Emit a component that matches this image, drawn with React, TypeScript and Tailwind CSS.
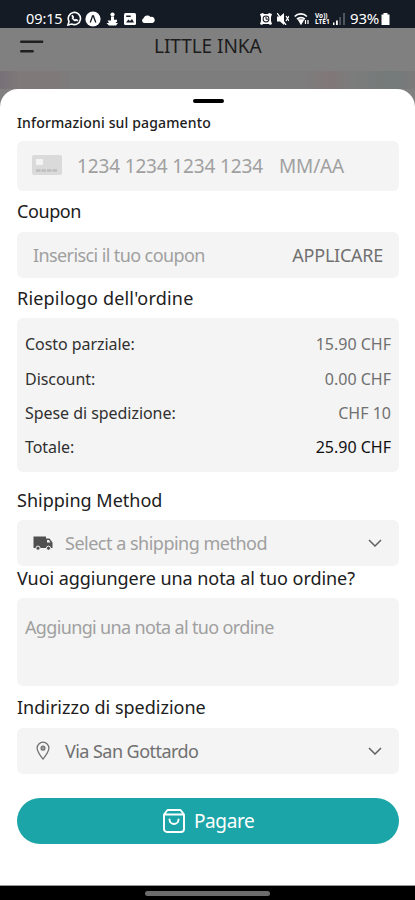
import React from 'react';

interface SectionTitleProps {
    children: React.ReactNode;
    className?: string;
}

const SectionTitle: React.FC<SectionTitleProps> = ({ children, className = '' }) => {
    return (
        <h2 className={`flex items-center whitespace-nowrap text-[18px] leading-none text-[#202020] ${className}`}>
            {children}
        </h2>
    );
};

const Chevron = () => (
    <svg className="ml-auto h-2 w-[14px]" viewBox="0 0 14 8" fill="none">
        <path d="M1 1l6 6 6-6" stroke="#606060" strokeWidth="1.5" />
    </svg>
);

const StatusBar = () => {
    return (
        <div className="flex h-7 shrink-0 items-center bg-[#151b25] pl-[26px] pt-[9px] text-white">
            <span className="w-[37px] whitespace-nowrap text-[14.5px] leading-none tracking-[-0.1px]">09:15</span>
            <svg className="ml-1 h-[15px] w-[15px]" viewBox="0 0 15 15" fill="none">
                <path d="M1 14l1-3.6A6.1 6.1 0 1 1 4.7 13z" stroke="white" strokeWidth="1.6" />
                <path d="M5 4.2l1.2 2-.7 1c.6 1.1 1.4 1.8 2.5 2.3l1-.8 2 1" stroke="white" strokeWidth="1.7" />
            </svg>
            <svg className="ml-[3px] h-4 w-4" viewBox="0 0 16 16">
                <circle cx="8" cy="8" r="7.6" fill="white" />
                <path d="M5.200 11.500Q7 7 7.500 5h1Q9 7 10.800 11.500" stroke="#151b25" strokeWidth="1.3" fill="none" />
            </svg>
            <svg className="ml-[5px] h-[14px] w-3" viewBox="0 0 12 14" fill="white">
                <circle cx="6.500" cy="2.500" r="2.100" />
                <path d="M5 4.500h3v3.300h3V9.500L9.500 11H12l-2 2.500H3L.5 11H3L1.500 8.500H5z" />
            </svg>
            <svg className="ml-[6px] h-3 w-3" viewBox="0 0 12 12">
                <rect width="12" height="12" rx="1.5" fill="white" />
                <path d="M2 9.500l2.400-3 1.600 1.500L8 6l2 3.500zM2.200 2.500h4.500V4H2.200z" fill="#151b25" />
            </svg>
            <svg className="ml-[5px] h-[9px] w-[14px]" viewBox="0 0 14 9" fill="white">
                <path d="M3 9a2.500 2.500 0 0 1-.5-4.700A4 3.800 0 0 1 9.500 3 3 3 0 0 1 11.500 9z" />
            </svg>
            <svg className="ml-[105px] h-3 w-3" viewBox="0 0 12 12">
                <path d="M0 1l3-1 1 1h4l1-1 3 1-1 3v4l1 3-2 1-1-1H3l-1 1-2-1 1-3V4z" fill="white" />
                <circle cx="6" cy="6" r="3.4" fill="#151b25" />
                <circle cx="6" cy="6" r="2.4" fill="white" />
                <path d="M6 3.800V6.200H8" stroke="#151b25" fill="none" />
            </svg>
            <svg className="ml-[5px] h-3 w-3" viewBox="0 0 12 12" fill="white">
                <path d="M0 3.500h3L7 0v12L3 8.500H0z" />
                <path d="M0 0l9 12M9 3l3 5M12 3L9 8" stroke="white" strokeWidth="1.3" />
            </svg>
            <svg className="ml-[5px] h-3 w-4" viewBox="0 0 16 12" fill="none" stroke="white" strokeWidth="1.7">
                <path d="M.7 3.500a8.500 8.500 0 0 1 12.200 0M3 6.200a5.400 5.400 0 0 1 7.800 0" />
                <path d="M5 7h4L7 10.500z" fill="white" />
                <path d="M11.500 7v4M14 11V7" strokeWidth="1.2" />
            </svg>
            <span className="ml-[5px] w-[15px] whitespace-pre-line text-[6.5px] font-bold leading-[6px]">{'Vo))\nLTE1'}</span>
            <svg className="ml-[3px] h-3 w-3" viewBox="0 0 12 12">
                <path d="M0 9.500h1.500V12H0zM3 7.500h1.800V12H3z" fill="white" />
                <path d="M6.200 4h1.800v8H6.200zM10 0h2v12h-2z" fill="#505660" />
            </svg>
            <span className="ml-[5px] w-[31px] whitespace-nowrap text-[15px] leading-none tracking-[-0.2px]">93%</span>
            <svg className="h-3 w-[9px]" viewBox="0 0 9 12" fill="white">
                <path d="M2.500 0h4v1.500H8.500V12H.5V1.500h2z" />
            </svg>
        </div>
    );
};

const PageHeader = () => {
    return (
        <div className="flex h-[61px] shrink-0 flex-col bg-[#808080]">
            <div className="flex h-[37px] items-center pl-5">
                <svg className="mb-[1px] h-[13px] w-6" viewBox="0 0 24 13" stroke="#202020" strokeWidth="2.4" strokeLinecap="round">
                    <path d="M1.200 1.700h21M1.200 11.200h11.500" />
                </svg>
                <h1 className="ml-[110px] whitespace-nowrap text-[19px] leading-none tracking-[-0.05px] text-[#1c1c1c]">LITTLE INKA</h1>
            </div>
            <div className="mt-[6px] flex-1 bg-[linear-gradient(90deg,#777177_0px,#80797a_20px,#80797a_55px,#7d7d7d_75px,#7d7d7d_300px,#807778_330px,#7b7c7c_355px,#737a79_395px,#7c7a7b_415px)]" />
        </div>
    );
};

const rows = [
    { label: 'Costo parziale:', value: '15.90 CHF' },
    { label: 'Discount:', value: '0.00 CHF' },
    { label: 'Spese di spedizione:', value: 'CHF 10' },
    { label: 'Totale:', value: '25.90 CHF', total: true },
];

const OrderSummary = () => {
    return (
        <div className="flex h-[154px] shrink-0 flex-col rounded-md bg-[#f4f4f4] px-2 pt-[9px] text-[16px] leading-none">
            {rows.map((row) => (
                <div key={row.label} className="flex h-[34.4px] items-center justify-between">
                    <span className="tracking-[-0.05px] text-[#303030]">{row.label}</span>
                    <span className={row.total ? 'text-[#101010]' : 'text-[#707070]'}>{row.value}</span>
                </div>
            ))}
        </div>
    );
};

const CheckoutSheet = () => {
    return (
        <div className="bg-[#808080]">
            <div className="flex h-[796px] flex-col rounded-t-[18px] bg-white px-4 pt-[10px]">
                <div className="ml-[177px] h-1 w-[31px] shrink-0 rounded-full bg-black" />
                <div className="flex flex-col pl-[1px]">
                    <SectionTitle className="h-[38px] pt-[1px] !text-[14px] font-medium tracking-[0.15px]">Informazioni sul pagamento</SectionTitle>
                    <div className="flex h-[50px] items-center rounded-md bg-[#f4f4f4] pl-[15px] text-[19px] leading-none text-[#a0a0a0]">
                        <svg className="mb-[2px] h-5 w-[30px]" viewBox="0 0 30 20">
                            <rect width="30" height="20" rx="2" fill="#dadada" />
                            <rect x="4" y="4" width="7" height="6" rx="1" fill="#f4f4f4" />
                            <path d="M4 15.500h22" stroke="#bdbdbd" strokeWidth="2.500" strokeDasharray="4.500 1" />
                        </svg>
                        <span className="ml-[15px] w-[202px] whitespace-nowrap pt-[1px] tracking-[-0.15px]">1234 1234 1234 1234</span>
                        <span className="whitespace-nowrap pt-[1px] tracking-[-0.15px]">MM/AA</span>
                    </div>
                    <SectionTitle className="h-[41px] pb-[2px] tracking-[-0.4px]">Coupon</SectionTitle>
                    <div className="flex h-[46px] items-center justify-between rounded-md bg-[#f4f4f4] px-4 pb-[1px] text-[18px] leading-none">
                        <span className="tracking-[-0.6px] text-[#a0a0a0]">Inserisci il tuo coupon</span>
                        <span className="tracking-[-0.25px] text-[#707070]">APPLICARE</span>
                    </div>
                    <SectionTitle className="h-10 tracking-[0.2px]">Riepilogo dell'ordine</SectionTitle>
                    <OrderSummary />
                    <SectionTitle className="h-12 pt-[7px]">Shipping Method</SectionTitle>
                    <div className="flex h-[46px] items-center rounded-md bg-[#f4f4f4] pl-4 pr-[17px] text-[18px] leading-none text-[#a0a0a0]">
                        <svg className="h-[15px] w-5" viewBox="0 0 20 15">
                            <path d="M.5.5h12.500v2h3.500l3 4v5.500H.5z" fill="#505050" />
                            <path d="M14 4h2l1.500 2.500H14z" fill="#f4f4f4" />
                            <circle cx="5" cy="12.200" r="2.100" fill="#505050" stroke="#f4f4f4" />
                            <circle cx="15.500" cy="12.200" r="2.100" fill="#505050" stroke="#f4f4f4" />
                        </svg>
                        <span className="ml-3 tracking-[-0.5px]">Select a shipping method</span>
                        <Chevron />
                    </div>
                    <SectionTitle className="h-8 pb-[8px] tracking-[-0.05px]">Vuoi aggiungere una nota al tuo ordine?</SectionTitle>
                    <div className="h-[88px] rounded-md bg-[#f4f4f4] px-2 pt-[20px] text-[18px] leading-none tracking-[-0.65px] text-[#a0a0a0]">
                        Aggiungi una nota al tuo ordine
                    </div>
                    <SectionTitle className="h-[42px]">Indirizzo di spedizione</SectionTitle>
                    <div className="flex h-[46px] items-center rounded-md bg-[#f4f4f4] pb-[1px] pl-[19px] pr-[17px] text-[18px] leading-none text-[#707070]">
                        <svg className="h-[19px] w-[14px]" viewBox="0 0 14 20" fill="none" stroke="#707070" strokeWidth="1.300">
                            <path d="M7 19C3.500 14.500.8 11 .8 7.500a6.200 6.200 0 0 1 12.400 0C13.200 11 10.500 14.500 7 19z" />
                            <circle cx="7" cy="7.500" r="2" fill="#a0a0a0" />
                        </svg>
                        <span className="ml-[15px] tracking-[-0.55px]">Via San Gottardo</span>
                        <Chevron />
                    </div>
                    <button className="mt-6 flex h-[46px] items-center rounded-full bg-[#1ba5a8] pl-[146px] text-[19px] leading-none text-white">
                        <svg className="h-6 w-[22px]" viewBox="0 0 22 24" fill="none" stroke="white" strokeWidth="1.900" strokeLinecap="round" strokeLinejoin="round">
                            <path d="M1 5.500L4.500 1h13L21 5.500V20a3 3 0 0 1-3 3H4a3 3 0 0 1-3-3zM1.500 5.500h19M6.500 10.500a4.500 4.500 0 0 0 9 0" />
                        </svg>
                        <span className="ml-[9px] pt-[1px] tracking-[-0.4px]">Pagare</span>
                    </button>
                </div>
            </div>
        </div>
    );
};

export default function App() {
    return (
        <div className="flex h-[900px] w-[415px] flex-col overflow-hidden bg-black font-['Noto_Sans',sans-serif]">
            <StatusBar />
            <PageHeader />
            <CheckoutSheet />
            <div className="flex flex-1 items-center justify-center border-t border-[#999999]">
                <div className="h-[5px] w-[125px] rounded-full bg-[#6c6c6c]" />
            </div>
        </div>
    );
}
